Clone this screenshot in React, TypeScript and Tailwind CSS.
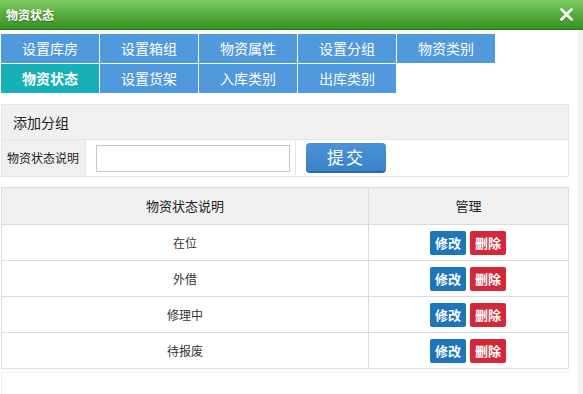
import React from 'react'

const tabs = [
  { label: '设置库房' },
  { label: '设置箱组' },
  { label: '物资属性' },
  { label: '设置分组' },
  { label: '物资类别' },
  { label: '物资状态', active: true },
  { label: '设置货架' },
  { label: '入库类别' },
  { label: '出库类别' },
]

const rows = ['在位', '外借', '修理中', '待报废']

export default function App() {
  return (
    <div className="w-[583px] h-[394px] overflow-hidden bg-white flex flex-col font-['Microsoft_YaHei','Noto_Sans_CJK_SC',sans-serif] text-[#333]">
      {/* Title bar */}
      <div className="h-[30px] shrink-0 flex items-center justify-between pl-[6px] pr-[9px] bg-gradient-to-b from-[#7fcb61] via-[#56ad3b] to-[#3a9125] border-b border-[#2e7a1e]">
        <span className="text-[12px] font-bold text-white [text-shadow:0_1px_1px_rgba(0,0,0,0.35)]">物资状态</span>
        <svg width="15" height="15" viewBox="0 0 15 15" className="drop-shadow-[0_1px_0_rgba(0,0,0,0.3)]">
          <path d="M2.5 2.5 L12.5 12.5 M12.5 2.5 L2.5 12.5" stroke="#f4fbef" strokeWidth="3" strokeLinecap="round" />
        </svg>
      </div>

      <div className="flex flex-1 min-h-0">
        <div className="flex-1 flex flex-col pt-[4px]">
          {/* Tabs */}
          <div className="grid grid-cols-[repeat(5,98px)] gap-[1px] ml-[1px]">
            {tabs.map((t) => (
              <div
                key={t.label}
                className={`h-[29px] flex items-center justify-center text-[14px] text-white ${
                  t.active ? 'bg-[#17b0b6] font-bold' : 'bg-[#5099dc]'
                }`}
              >
                {t.label}
              </div>
            ))}
          </div>

          {/* Add form */}
          <div className="mt-[11px] ml-[1px] w-[568px] border border-[#e6e6e6] text-[12px]">
            <div className="h-[35px] bg-[#f0f0f0] flex items-center pl-[11px] text-[14px] text-[#222] border-b border-[#e6e6e6]">
              添加分组
            </div>
            <div className="h-[36px] flex">
              <div className="w-[84px] bg-[#f0f0f0] flex items-center pl-[5px] text-[12px] text-[#222] border-r border-[#e6e6e6]">
                物资状态说明
              </div>
              <div className="w-[210px] flex items-center pl-[10px] border-r border-[#e6e6e6]">
                <input className="w-[194px] h-[27px] border border-[#c8c8c8] bg-white outline-none" />
              </div>
              <div className="flex-1 flex items-center pl-[10px]">
                <button className="w-[80px] h-[30px] rounded-[4px] bg-gradient-to-b from-[#4b93d6] to-[#3a82c8] border-b-2 border-[#2b6aa8] text-white text-[17px] tracking-[2px]">
                  提交
                </button>
              </div>
            </div>
          </div>

          {/* Table */}
          <div className="mt-[10px] ml-[1px] w-[568px] border border-[#dcdcdc] text-[12px]">
            <div className="h-[36px] flex bg-[#f0f0f0] text-[13px] text-[#222]">
              <div className="w-[367px] flex items-center justify-center border-r border-[#dcdcdc]">物资状态说明</div>
              <div className="flex-1 flex items-center justify-center">管理</div>
            </div>
            {rows.map((r) => (
              <div key={r} className="h-[36px] flex border-t border-[#dcdcdc]">
                <div className="w-[367px] flex items-center justify-center border-r border-[#dcdcdc] text-[#333]">{r}</div>
                <div className="flex-1 flex items-center justify-center gap-[4px] pr-[1px]">
                  <button className="w-[36px] h-[24px] rounded-[2px] bg-[#1d75ba] text-white text-[13px] font-bold">修改</button>
                  <button className="w-[36px] h-[24px] rounded-[2px] bg-[#d3283a] text-white text-[13px] font-bold">删除</button>
                </div>
              </div>
            ))}
          </div>

          <div className="mt-[3px] ml-[1px] w-[568px] flex-1 border-t border-l border-[#efefef]" />
        </div>
        <div className="w-[5px] shrink-0 bg-[#f1f1f1]" />
      </div>
    </div>
  )
}
